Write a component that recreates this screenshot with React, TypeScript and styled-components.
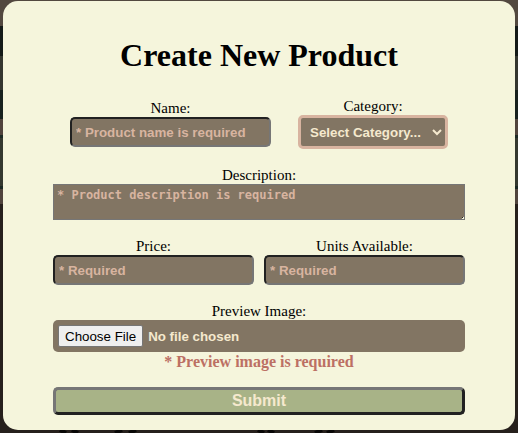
import React from "react";
import styled, { createGlobalStyle, css } from "styled-components";

const GlobalStyle = createGlobalStyle`
  * { box-sizing: border-box; }
  body {
    margin: 0;
    font: 16px/18px "Liberation Serif", "Times New Roman", serif;
    color: #000;
    background: #26201c;
  }
`;

const Page = styled.main`
  position: relative;
  min-height: 100vh;
  padding: 1px 3px 3px;
  background: linear-gradient(
    #52483f 0 26px, #141a18 26px 56px, #34362f 56px 90px, #17211e 90px 119px,
    #51443d 119px 135px, #1d2a25 135px 138px, #34382f 138px 186px,
    #1a2723 186px 189px, #50443d 189px 204px, #26201c 204px
  );
`;

const Backdrop = styled.svg`
  position: absolute;
  left: 0;
  bottom: 0;
  width: 100%;
  height: 3px;
`;

const Card = styled.form`
  position: relative;
  display: flex;
  flex-direction: column;
  padding: 36px 50px 15px;
  border-radius: 15px;
  background: #f5f5dc;
`;

const Title = styled.h1`
  margin: 0 0 24px;
  font-size: 32px;
  line-height: 36px;
  text-align: center;
`;

const Row = styled.div<{ $gap: number; $fill?: boolean }>`
  display: flex;
  justify-content: center;
  align-items: center;
  gap: ${(p) => p.$gap}px;
  margin-bottom: 17px;
  > * { flex: ${(p) => (p.$fill ? "1 1 0" : "0 0 auto")}; }
`;

const Field = styled.div<{ $spaced?: boolean }>`
  display: flex;
  flex-direction: column;
  min-width: 0;
  margin-bottom: ${(p) => (p.$spaced ? 17 : 0)}px;
`;

const Label = styled.label`
  font-size: 15px;
  text-align: center;
`;

const control = css`
  margin: 0;
  color: #f5e9ce;
  background: #827563;
  font-family: "Liberation Sans", Arial, sans-serif;
  font-weight: bold;
  &::placeholder { color: #d8b4a0; opacity: 1; }
`;

const TextInput = styled.input`
  ${control}
  width: 100%;
  height: 30px;
  padding: 1px 4px;
  border: 2px solid;
  border-color: #212121 #767676 #767676 #212121;
  border-radius: 5px;
`;

const NameField = styled(Field)`
  width: 201px;
`;

const Select = styled.select`
  ${control}
  width: 150px;
  height: 34px;
  padding: 0 0 0 5px;
  border: 3px solid #d8b4a0;
  border-radius: 5px;
`;

const TextArea = styled.textarea`
  ${control}
  height: 36px;
  padding: 2px 3px;
  border: 1px solid #767676;
  font: bold 12px/16px "DejaVu Sans Mono", monospace;
  resize: vertical;
  &::-webkit-resizer {
    background: linear-gradient(135deg, #212121 50%, #f5f5dc 50%) right bottom / 2px 2px no-repeat;
  }
`;

const FileInput = styled.input`
  ${control}
  width: 100%;
  height: 32px;
  padding: 5px;
  border-radius: 5px;
  &::file-selector-button {
    height: 22px;
    margin: 0 5px 0 0;
    padding: 1px 6px;
    border: 1px solid #767676;
    border-radius: 2px;
    color: #000;
    background: #efefef;
    font-family: "Liberation Sans", Arial, sans-serif;
    font-weight: normal;
  }
`;

const ErrorText = styled.p`
  margin: 1px 0 16px;
  color: #bc7064;
  font-weight: bold;
  text-align: center;
`;

const SubmitButton = styled.button`
  height: 28px;
  padding: 0;
  border: 3px solid;
  border-color: #767676 #212121 #212121 #767676;
  border-radius: 5px;
  color: #f5e9ce;
  background: #a8b387;
  font: bold 16px "Liberation Sans", Arial, sans-serif;
`;

export default function App() {
  return (
    <>
      <GlobalStyle />
      <Page>
        <Backdrop aria-hidden="true">
          <path d="M60 0l6 3M72 0l6 3M122 0l-7 3M136 0l-7 3M258 0l6 3M268 0l6 3M322 0l-7 3M334 0l-7 3" stroke="#080706" strokeWidth="4" />
        </Backdrop>
        <Card onSubmit={(e) => e.preventDefault()} noValidate>
          <Title>Create New Product</Title>
          <Row $gap={27}>
            <NameField>
              <Label htmlFor="name">Name:</Label>
              <TextInput id="name" placeholder="* Product name is required" />
            </NameField>
            <Field>
              <Label htmlFor="category">Category:</Label>
              <Select id="category" defaultValue="">
                <option value="">Select Category...</option>
              </Select>
            </Field>
          </Row>
          <Field $spaced>
            <Label htmlFor="description">Description:</Label>
            <TextArea id="description" placeholder="* Product description is required" />
          </Field>
          <Row $gap={10} $fill>
            <Field>
              <Label htmlFor="price">Price:</Label>
              <TextInput id="price" placeholder="* Required" />
            </Field>
            <Field>
              <Label htmlFor="units">Units Available:</Label>
              <TextInput id="units" placeholder="* Required" />
            </Field>
          </Row>
          <Field>
            <Label htmlFor="image">Preview Image:</Label>
            <FileInput id="image" type="file" aria-describedby="image-error" />
          </Field>
          <ErrorText id="image-error">* Preview image is required</ErrorText>
          <SubmitButton type="submit">Submit</SubmitButton>
        </Card>
      </Page>
    </>
  );
}
